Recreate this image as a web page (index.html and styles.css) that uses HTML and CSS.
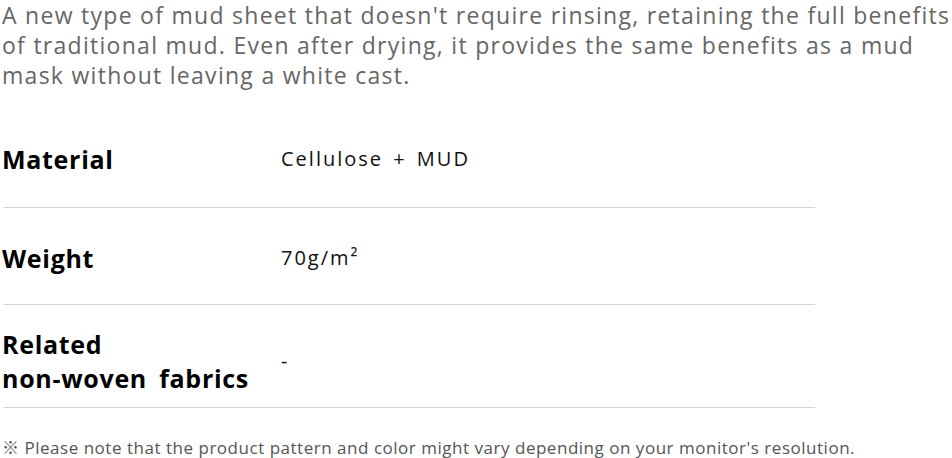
FILE: index.html
```html
<!DOCTYPE html>
<html lang="en">
<head>
<meta charset="utf-8">
<title>Mud sheet</title>
<link rel="stylesheet" href="styles.css">
</head>
<body>
<div class="page">
  <p class="intro">A new type of mud sheet that doesn't require rinsing, retaining the full benefits<br>of traditional mud. Even after drying, it provides the same benefits as a mud<br>mask without leaving a white cast.</p>
  <div class="specs">
    <div class="row row-first">
      <div class="label">Material</div>
      <div class="value">Cellulose + MUD</div>
    </div>
    <div class="row row-mid">
      <div class="label">Weight</div>
      <div class="value">70g/m²</div>
    </div>
    <div class="row row-last">
      <div class="label">Related<br>non-woven fabrics</div>
      <div class="value">-</div>
    </div>
  </div>
  <p class="note">※ Please note that the product pattern and color might vary depending on your monitor's resolution.</p>
</div>
</body>
</html>
```

FILE: styles.css
```css
html, body {
  margin: 0;
  padding: 0;
  background: #fff;
}
.page {
  padding: 0 0 0 2px;
  font-family: "Open Sans", "Noto Sans CJK KR", sans-serif;
}
.intro {
  margin: 0;
  font-size: 23px;
  line-height: 30px;
  letter-spacing: 1.28px;
  color: #666;
  white-space: nowrap;
}
.specs {
  width: 811px;
  margin: 18px 0 0 2px;
}
.row {
  display: flex;
  align-items: center;
  border-bottom: 1px solid #d4d4d4;
}
.row-first { padding: 34px 0 31px; }
.row-mid { padding: 33px 0 29px; }
.row-last { padding: 22px 0 12px; }
.label {
  width: 279px;
  flex: none;
  margin-left: -2px;
  font-size: 25px;
  font-weight: 700;
  line-height: 34px;
  letter-spacing: 0.7px;
  word-spacing: 5px;
  color: #000;
}
.value {
  font-size: 20px;
  line-height: 34px;
  letter-spacing: 2px;
  word-spacing: 3px;
  color: #111;
}
.note {
  margin: 28px 0 0;
  font-size: 17px;
  line-height: 24px;
  letter-spacing: 0.52px;
  color: #555;
  white-space: nowrap;
}
```
